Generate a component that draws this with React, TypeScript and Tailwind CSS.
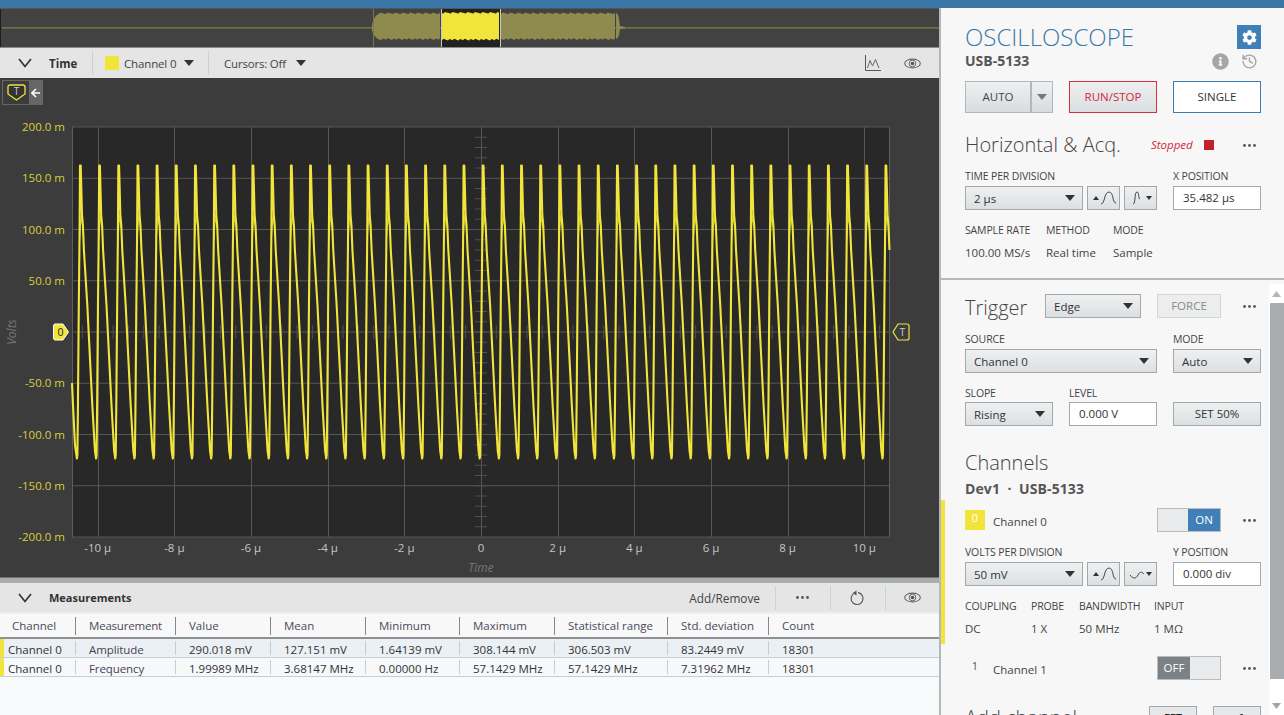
import React from "react";
import { FaCog, FaInfoCircle } from "react-icons/fa";
import { History } from "lucide-react";

const Y = "#f1e53b";

function Tri({ c = "#333" }: { c?: string }) {
  return (
    <svg width="10" height="6" viewBox="0 0 10 6" className="shrink-0">
      <path d="M0 0H10L5 6Z" fill={c} />
    </svg>
  );
}
function Dots() {
  return (
    <svg width="13" height="3" viewBox="0 0 13 3" className="shrink-0">
      <circle cx="1.5" cy="1.5" r="1.4" fill="#555" />
      <circle cx="6.5" cy="1.5" r="1.4" fill="#555" />
      <circle cx="11.5" cy="1.5" r="1.4" fill="#555" />
    </svg>
  );
}
function Chevron() {
  return (
    <svg width="14" height="10" viewBox="0 0 14 10" className="shrink-0">
      <path d="M1 1L7 8.5L13 1" fill="none" stroke="#333" strokeWidth="1.7" />
    </svg>
  );
}
function Eye() {
  return (
    <svg width="17" height="11" viewBox="0 0 17 11" className="shrink-0">
      <ellipse cx="8.5" cy="5.5" rx="7.8" ry="4.4" fill="none" stroke="#666" strokeWidth="1.1" />
      <circle cx="8.5" cy="5.5" r="3.3" fill="none" stroke="#666" strokeWidth="1" />
      <circle cx="8.5" cy="5.5" r="1.8" fill="#555" />
    </svg>
  );
}
function Select({ label, className = "" }: { label: string; className?: string }) {
  return (
    <div className={"flex h-6 items-center justify-between border border-[#a3a8ab] bg-gradient-to-b from-[#eef0f1] to-[#dde0e2] pl-[8px] pr-[7px] text-[#333] " + className}>
      <span className="translate-y-px">{label}</span>
      <Tri />
    </div>
  );
}
function Input({ value }: { value: string }) {
  return <div className="flex h-6 items-center border border-[#a3a8ab] bg-white pl-[9px] text-[#333]">{value}</div>;
}
function Label({ children }: { children: React.ReactNode }) {
  return <div className="flex h-3 translate-y-px items-center text-[10.5px] uppercase tracking-[-0.15px] text-[#444]">{children}</div>;
}
function SineBtn({ down, flat }: { down?: boolean; flat?: boolean }) {
  return (
    <div className="flex h-6 w-[33px] items-center justify-center border border-[#a3a8ab] bg-gradient-to-b from-[#eef0f1] to-[#dde0e2]">
      {down ? (
        <svg width="26" height="16" viewBox="0 0 26 16">
          {flat ? (
            <path d="M2 9C5 13 8 13 10 9C12 5 14 6 16 8" fill="none" stroke="#444" strokeWidth="1" />
          ) : (
            <path d="M5 14C8 14 6 2 9 2C11.5 2 10 9 12 9" fill="none" stroke="#444" strokeWidth="1" />
          )}
          <path d="M18 6H24L21 10Z" fill="#333" />
        </svg>
      ) : (
        <svg width="28" height="16" viewBox="0 0 28 16">
          <path d="M3 10L6 6L9 10Z" fill="#333" />
          <path d="M11 14C15 14 14 2 19 2C24 2 22 13 26 13" fill="none" stroke="#444" strokeWidth="1" />
        </svg>
      )}
    </div>
  );
}
function Toggle({ on }: { on: boolean }) {
  return (
    <div className="flex h-6 w-16 border border-[#b9bdc0] bg-[#e9ebec] text-[#fff]">
      {on ? (
        <>
          <div className="flex-1" />
          <div className="flex w-8 items-center justify-center bg-[#3f80b8]">ON</div>
        </>
      ) : (
        <>
          <div className="flex w-8 items-center justify-center bg-[#7b8185]">OFF</div>
          <div className="flex-1" />
        </>
      )}
    </div>
  );
}

function Overview() {
  const seg = (a: number, b: number, t0: number, b0: number) => {
    let up = "";
    let dn = "";
    for (let x = a; x <= b; x += 1.5) {
      const i = Math.round(x * 2);
      const j = ((i * 7) % 5) * 0.4;
      const k = ((i * 11) % 7) * 0.3;
      up += `${x},${t0 + j} `;
      dn = `${x},${b0 - k} ` + dn;
    }
    return up + dn;
  };
  return (
    <svg width="939" height="38" viewBox="0 0 939 38" className="block">
      <rect width="939" height="38" fill="#424242" />
      <rect x="0" width="1" height="38" fill="#1d1d1d" />
      <rect x="2" y="18" width="937" height="1.6" fill="#74713f" />
      <polygon points={seg(380, 441, 3.5, 31)} fill="#8f8a4e" />
      <polygon points={seg(501, 616, 3.5, 31)} fill="#8f8a4e" />
      <path d="M372 18C372 12 375 6 380 4V31C375 29 372 24 372 20Z" fill="#8f8a4e" />
      <path d="M616 4C619 5 619 10 620 17L625 18V19.5L620 20C619 26 619 29 616 30Z" fill="#8f8a4e" />
      <rect x="373" width="1" height="38" fill="#7c7842" />
      <rect x="441" width="60" height="38" fill="#222" />
      <rect x="441" width="1" height="38" fill="#c9c9c9" />
      <rect x="500" width="1" height="38" fill="#c9c9c9" />
      <polygon points={seg(442, 500, 3, 31.5)} fill={Y} />
    </svg>
  );
}

function Plot() {
  const L = 72, R = 890, T = 127, B = 537;
  const ys = [127, 178.25, 229.5, 280.75, 332, 383.25, 434.5, 485.75, 537];
  const yl = ["200.0 m", "150.0 m", "100.0 m", "50.0 m", "", "-50.0 m", "-100.0 m", "-150.0 m", "-200.0 m"];
  const xs = [-10, -8, -6, -4, -2, 0, 2, 4, 6, 8, 10];
  const xp = (v: number) => 481 + v * 38.33;
  const per = 19.18;
  const p0 = 80.3;
  const main: string[] = ["72,383", "73,405", "75,445"];
  const alt: string[] = [];
  for (let n = -1; n <= 42; n++) {
    const x = p0 + n * per;
    const seq: [number, number][] = [
      [-3.9, 455], [-3.4, 458.5], [-2.9, 455], [-2.3, 400], [-1.5, 305], [-0.8, 240], [-0.3, 165.5], [0.4, 165.5], [1.7, 215], [2.6, 225], [3.6, 250], [7, 305], [9, 345], [12, 405], [14.3, 445], [14.7, 451],
    ];
    for (const [dx, y] of seq) {
      const px = x + dx;
      if (px >= 75.5 && px <= 889.5) main.push(`${px.toFixed(2)},${y}`);
    }
    if (n >= 0) alt.push(`M${(x - 0.8).toFixed(2)} 240L${(x + 0.9).toFixed(2)} 215L${(x + 2.6).toFixed(2)} 228`);
  }
  const vt: number[] = [];
  for (let x = 481 - 15.33 * 26; x < R; x += 15.33) if (x > L) vt.push(x);
  const ht: number[] = [];
  for (let y = 127 + 10.25; y < B; y += 10.25) ht.push(y);
  return (
    <svg width="939" height="499" viewBox="0 78 939 499" className="block">
      <rect x="0" y="78" width="939" height="499" fill="#3c3c3c" />
      <rect x={L} y={T} width={R - L} height={B - T} fill="#282828" />
      {ys.map((y) => (
        <line key={y} x1={L} x2={R} y1={y} y2={y} stroke="#565656" strokeWidth="1" />
      ))}
      {xs.map((v) => (
        <line key={v} x1={Math.round(xp(v)) + 0.5} x2={Math.round(xp(v)) + 0.5} y1={T} y2={B} stroke="#565656" strokeWidth="1" />
      ))}
      {vt.map((x) => (
        <line key={x} x1={x} x2={x} y1={325} y2={339} stroke="#4f4f4f" />
      ))}
      {ht.map((y) => (
        <line key={y} x1={475} x2={487} y1={y} y2={y} stroke="#4f4f4f" />
      ))}
      <line x1={L + 0.5} x2={L + 0.5} y1={T} y2={B} stroke="#5e5e5e" />
      <line x1={R - 0.5} x2={R - 0.5} y1={T} y2={B} stroke="#5e5e5e" />
      <path d={alt.join("")} fill="none" stroke="#c9c03a" strokeWidth="1.2" />
      <polyline points={main.join(" ")} fill="none" stroke={Y} strokeWidth="2.1" strokeLinejoin="round" />
      {ys.map((y, i) =>
        yl[i] ? (
          <text key={y} x="65" y={y + 4} textAnchor="end" fontSize="11.5" fill="#d9cf3c">
            {yl[i]}
          </text>
        ) : null
      )}
      {xs.map((v) => (
        <text key={v} x={xp(v)} y="552" textAnchor="middle" fontSize="11.5" fill="#c4c4c4">
          {v === 0 ? "0" : v + " µ"}
        </text>
      ))}
      <text x="481" y="572" textAnchor="middle" fontSize="12" fontStyle="italic" fill="#757575">
        Time
      </text>
      <text transform="translate(16 332) rotate(-90)" textAnchor="middle" fontSize="12" fontStyle="italic" fill="#757575">
        Volts
      </text>
      <path d="M55 324H63L68.5 332L63 340H55Q53.5 340 53.5 338V326Q53.5 324 55 324Z" fill={Y} stroke="#fff" strokeWidth="1" />
      <text x="60.5" y="336" textAnchor="middle" fontSize="10.5" fill="#222">
        0
      </text>
      <path d="M898 324H907Q909 324 909 326V338Q909 340 907 340H898L893 332Z" fill="#3c3c3c" stroke={Y} strokeWidth="1.2" />
      <text x="902.5" y="336" textAnchor="middle" fontSize="10.5" fill="#ccc">
        T
      </text>
    </svg>
  );
}

function TimeBar() {
  return (
    <div className="flex h-[30px] items-center bg-[#e5e5e5] text-[#333]">
      <div className="ml-[18px] w-[31px]">
        <Chevron />
      </div>
      <span className="w-[43px] translate-y-px text-[11.5px] font-bold text-[#333]">Time</span>
      <div className="h-6 w-px bg-[#cfcfcf]" />
      <div className="ml-3 h-[14px] w-[14px] bg-[#f1e53b]" />
      <span className="ml-[5px] w-[60px] translate-y-px tracking-[-0.15px] text-[#444]">Channel 0</span>
      <Tri />
      <div className="ml-[14px] h-6 w-px bg-[#cfcfcf]" />
      <span className="ml-[15px] w-[72px] translate-y-px tracking-[-0.2px] text-[#444]">Cursors: Off</span>
      <Tri />
      <div className="flex-1" />
      <svg width="16" height="16" viewBox="0 0 16 16" className="shrink-0">
        <path d="M0.5 0V15.5H16" fill="none" stroke="#555" strokeWidth="1" />
        <path d="M2.5 13L5 5.5L7.5 11L10.5 4.5L14 13" fill="none" stroke="#666" strokeWidth="1" />
      </svg>
      <div className="ml-[23px] mr-[18px]">
        <Eye />
      </div>
    </div>
  );
}

function MeasureRow({ cells, bg }: { cells: string[]; bg: string }) {
  return (
    <div className={"flex h-[19px] items-center border-b border-[#c6ced4] " + bg}>
      <div className="h-full w-1 shrink-0 bg-[#f1e53b]" />
      <div className="grid flex-1 grid-cols-[71px_100px_95px_95px_94px_95px_113px_101px_1fr] text-[#333]">
        {cells.map((c, i) => (
          <div key={i} className={i === 0 ? "flex h-[14px] items-center pl-1" : "flex h-[14px] items-center border-l border-[#c9cdd0] pl-[13px]"}>
            <span className={"translate-y-[2px] " + (i === 1 ? "tracking-[-0.1px] text-[#4a3f55]" : "")}>{c}</span>
          </div>
        ))}
      </div>
    </div>
  );
}

function Measurements() {
  const heads = ["Channel", "Measurement", "Value", "Mean", "Minimum", "Maximum", "Statistical range", "Std. deviation", "Count"];
  return (
    <div className="flex flex-1 flex-col bg-[#f9fafb]">
      <div className="h-[6px] border-t border-[#6f7275] bg-[#a9adb0]" />
      <div className="flex h-[29px] items-center bg-[#e5e5e5] text-[#333]">
        <div className="ml-[18px] w-[31px]">
          <Chevron />
        </div>
        <span className="translate-y-px text-[11px] font-bold">Measurements</span>
        <div className="flex-1" />
        <span className="translate-y-px text-[11.8px] text-[#444]">Add/Remove</span>
        <div className="ml-[15px] h-6 w-px bg-[#cdd2d5]" />
        <div className="ml-5">
          <Dots />
        </div>
        <div className="ml-[21px] h-6 w-px bg-[#cdd2d5]" />
        <svg width="16" height="16" viewBox="0 0 16 16" className="ml-[18px] shrink-0">
          <path d="M5 3.4A6 6 0 1 0 9 2.6" fill="none" stroke="#555" strokeWidth="1.1" />
          <path d="M7.5 0.5V5.5L3.8 3Z" fill="#555" />
        </svg>
        <div className="ml-5 h-6 w-px bg-[#cdd2d5]" />
        <div className="ml-[18px] mr-[18px]">
          <Eye />
        </div>
      </div>
      <div className="h-[2px] bg-[#efefef]" />
      <div className="grid h-[25px] grid-cols-[75px_100px_95px_95px_94px_95px_113px_101px_1fr] items-center border-b-2 border-[#8d9194] bg-[#f8f8f8] text-[#4a4a58]">
        {heads.map((h, i) => (
          <div key={h} className={i === 0 ? "pl-3" : "flex h-[18px] items-center border-l border-[#85888b] pl-[13px] " + (i === 1 ? "tracking-[-0.2px]" : "")}>
            {h}
          </div>
        ))}
      </div>
      <MeasureRow bg="bg-[#ebf0f4]" cells={["Channel 0", "Amplitude", "290.018 mV", "127.151 mV", "1.64139 mV", "308.144 mV", "306.503 mV", "83.2449 mV", "18301"]} />
      <MeasureRow bg="bg-[#f7f8fa]" cells={["Channel 0", "Frequency", "1.99989 MHz", "3.68147 MHz", "0.00000 Hz", "57.1429 MHz", "57.1429 MHz", "7.31962 MHz", "18301"]} />
    </div>
  );
}

function H({ children, className = "" }: { children: React.ReactNode; className?: string }) {
  return <div className={"text-[20px] font-light text-[#444] " + className}>{children}</div>;
}

function TopPanel() {
  return (
    <div className="h-[272px] shrink-0 border-b-2 border-[#b5b7b8] pl-6 pr-[23px] pt-[17px]">
      <div className="flex h-6 items-center justify-between">
        <div className="text-[24px] font-light leading-6 text-[#3a78a8]">OSCILLOSCOPE</div>
        <div className="flex h-6 w-6 items-center justify-center bg-[#3f80b8]">
          <FaCog className="text-[15px] text-white" />
        </div>
      </div>
      <div className="mt-px flex h-5 items-center justify-between">
        <span className="text-[14px] font-bold text-[#555]">USB-5133</span>
        <div className="flex translate-y-px items-center gap-[12px] pr-[3px]">
          <FaInfoCircle className="text-[17px] text-[#a6a6a6]" />
          <History size={17} className="text-[#a6a6a6]" />
        </div>
      </div>
      <div className="mt-[11px] grid h-8 grid-cols-[88px_88px_88px] gap-x-4">
        <div className="flex border border-[#b3b7ba] bg-gradient-to-b from-[#eef0f1] to-[#d9dcde] text-[#3c4654]">
          <div className="flex flex-1 items-center justify-center border-r-2 border-[#b3b7ba]">AUTO</div>
          <div className="flex w-[20px] items-center justify-center">
            <Tri c="#777" />
          </div>
        </div>
        <div className="flex items-center justify-center border border-[#d9303e] bg-gradient-to-b from-[#eceeef] to-[#dcdfe1] text-[#d2283a]">RUN/STOP</div>
        <div className="flex items-center justify-center border border-[#3a7db5] bg-white text-[#333]">SINGLE</div>
      </div>
      <div className="mt-[17px] flex h-[30px] items-center">
        <H className="w-[186px]">Horizontal &amp; Acq.</H>
        <span className="w-[53px] text-[11.5px] italic text-[#d2283a]">Stopped</span>
        <div className="h-[10px] w-[10px] bg-[#c4202a]" />
        <div className="ml-[29px]">
          <Dots />
        </div>
      </div>
      <div className="mt-[10px] grid grid-cols-[192px_88px] gap-x-4">
        <Label>Time per division</Label>
        <Label>X position</Label>
      </div>
      <div className="mt-1 grid grid-cols-[192px_88px] gap-x-4">
        <div className="flex gap-1">
          <Select label="2 µs" className="flex-1" />
          <SineBtn />
          <SineBtn down />
        </div>
        <Input value="35.482 µs" />
      </div>
      <div className="mt-[14px] flex">
        <div className="w-[81px]"><Label>Sample rate</Label></div>
        <div className="w-[67px]"><Label>Method</Label></div>
        <Label>Mode</Label>
      </div>
      <div className="mt-[9px] flex h-4 items-center text-[#444]">
        <div className="w-[81px]">100.00 MS/s</div>
        <div className="w-[67px]">Real time</div>
        <div>Sample</div>
      </div>
    </div>
  );
}

function TriggerAndChannels() {
  return (
    <div className="min-w-0 flex-1 overflow-hidden">
      <div className="pl-6 pr-2 pt-[14px]">
        <div className="flex h-6 items-center">
          <H className="w-[80px] translate-y-[2px]">Trigger</H>
          <Select label="Edge" className="w-24" />
          <div className="ml-4 flex h-6 w-16 items-center justify-center border border-[#d2d5d7] bg-[#eceded] text-[#8a8a8a]">FORCE</div>
          <div className="ml-[22px]">
            <Dots />
          </div>
        </div>
        <div className="mt-[15px] grid grid-cols-[192px_88px] gap-x-4">
          <Label>Source</Label>
          <Label>Mode</Label>
        </div>
        <div className="mt-1 grid grid-cols-[192px_88px] gap-x-4">
          <Select label="Channel 0" />
          <Select label="Auto" />
        </div>
        <div className="mt-[14px] grid grid-cols-[88px_88px_88px] gap-x-4">
          <Label>Slope</Label>
          <Label>Level</Label>
        </div>
        <div className="mt-[3px] grid grid-cols-[88px_88px_88px] gap-x-4">
          <Select label="Rising" />
          <Input value="0.000 V" />
          <div className="flex h-6 items-center justify-center border border-[#a3a8ab] bg-gradient-to-b from-[#eef0f1] to-[#dde0e2] text-[#333]">SET 50%</div>
        </div>
        <H className="mt-[22px] flex h-[30px] items-center">Channels</H>
        <div className="flex h-[22px] -translate-y-px items-center text-[14px] font-bold tracking-[0.1px] text-[#555]">Dev1&nbsp;&nbsp;·&nbsp;&nbsp;USB-5133</div>
      </div>
      <div className="h-[144px] border-l-4 border-[#f1e53b] pl-5 pr-2 pt-2">
        <div className="flex h-6 items-center">
          <div className="flex h-5 w-5 items-start justify-center bg-[#f1e53b] text-[11px] text-white">0</div>
          <span className="ml-2 w-[164px] translate-y-[2px] text-[#444]">Channel 0</span>
          <Toggle on />
          <div className="ml-[22px]">
            <Dots />
          </div>
        </div>
        <div className="mt-[14px] grid grid-cols-[192px_88px] gap-x-4">
          <Label>Volts per division</Label>
          <Label>Y position</Label>
        </div>
        <div className="mt-1 grid grid-cols-[192px_88px] gap-x-4">
          <div className="flex gap-1">
            <Select label="50 mV" className="flex-1" />
            <SineBtn />
            <SineBtn down flat />
          </div>
          <Input value="0.000 div" />
        </div>
        <div className="mt-[14px] flex">
          <div className="w-[66px]"><Label>Coupling</Label></div>
          <div className="w-[48px]"><Label>Probe</Label></div>
          <div className="w-[75px]"><Label>Bandwidth</Label></div>
          <Label>Input</Label>
        </div>
        <div className="mt-[9px] flex h-4 items-center text-[#444]">
          <div className="w-[66px]">DC</div>
          <div className="w-[48px]">1 X</div>
          <div className="w-[75px]">50 MHz</div>
          <div>1 MΩ</div>
        </div>
      </div>
      <div className="pl-6 pr-2 pt-3">
        <div className="flex h-6 items-center">
          <div className="flex h-5 w-5 items-start justify-center text-[11px] text-[#555]">1</div>
          <span className="ml-2 w-[164px] translate-y-[2px] text-[#444]">Channel 1</span>
          <Toggle on={false} />
          <div className="ml-[22px]">
            <Dots />
          </div>
        </div>
        <div className="mt-[26px] flex h-6 items-start">
          <H className="w-[184px] leading-6">Add channel</H>
          <div className="flex h-6 w-12 items-center justify-center border border-[#a3a8ab] bg-[#e6e8e9]">FFT</div>
          <div className="ml-4 flex h-6 w-12 items-center justify-center border border-[#a3a8ab] bg-[#e6e8e9]">+ƒ</div>
        </div>
      </div>
    </div>
  );
}

function Scrollbar() {
  return (
    <div className="mt-1 flex w-[15px] shrink-0 flex-col items-center bg-white">
      <div className="flex h-[19px] items-center justify-center">
        <svg width="9" height="6" viewBox="0 0 9 6"><path d="M0 6H9L4.5 0Z" fill="#b5b5b5" /></svg>
      </div>
      <div className="ml-px h-[376px] w-[14px] bg-[#a9adb0]" />
      <div className="flex flex-1 items-center justify-center pt-[18px]">
        <svg width="9" height="6" viewBox="0 0 9 6"><path d="M0 0H9L4.5 6Z" fill="#a5a5a5" /></svg>
      </div>
    </div>
  );
}

export default function App() {
  return (
    <div className="flex h-[715px] w-[1284px] flex-col overflow-hidden bg-white font-['Open_Sans','Noto_Sans',sans-serif] text-[11.5px]">
      <div className="h-2 shrink-0 bg-[#3a76a5]" />
      <div className="flex min-h-0 flex-1">
        <div className="relative flex w-[939px] shrink-0 flex-col">
          <div className="h-px bg-[#555]" />
          <Overview />
          <div className="h-px bg-[#8a8a8a]" />
          <TimeBar />
          <Plot />
          <div className="absolute left-[2px] top-[72px] flex h-[25px] w-[41px] border border-[#666] bg-[#3c3c3c]">
            <div className="flex w-[26px] items-center justify-center">
              <svg width="19" height="17" viewBox="0 0 19 17" className="shrink-0">
                <path d="M3 1H16Q18 1 18 3V10L9.5 16L1 10V3Q1 1 3 1Z" fill="#333" stroke={Y} strokeWidth="1.3" />
                <text x="9.5" y="11" textAnchor="middle" fontSize="10" fill="#ccc">T</text>
              </svg>
            </div>
            <div className="flex flex-1 items-center justify-center bg-[#666]">
              <svg width="10" height="10" viewBox="0 0 10 10">
                <path d="M5 1L1 5L5 9M1 5H9" fill="none" stroke="#fff" strokeWidth="1.6" />
              </svg>
            </div>
          </div>
          <Measurements />
        </div>
        <div className="flex min-w-0 flex-1 flex-col border-l-2 border-[#b5b7b8] bg-[#f7f7f7]">
          <TopPanel />
          <div className="flex min-h-0 flex-1">
            <TriggerAndChannels />
            <Scrollbar />
          </div>
        </div>
      </div>
    </div>
  );
}
